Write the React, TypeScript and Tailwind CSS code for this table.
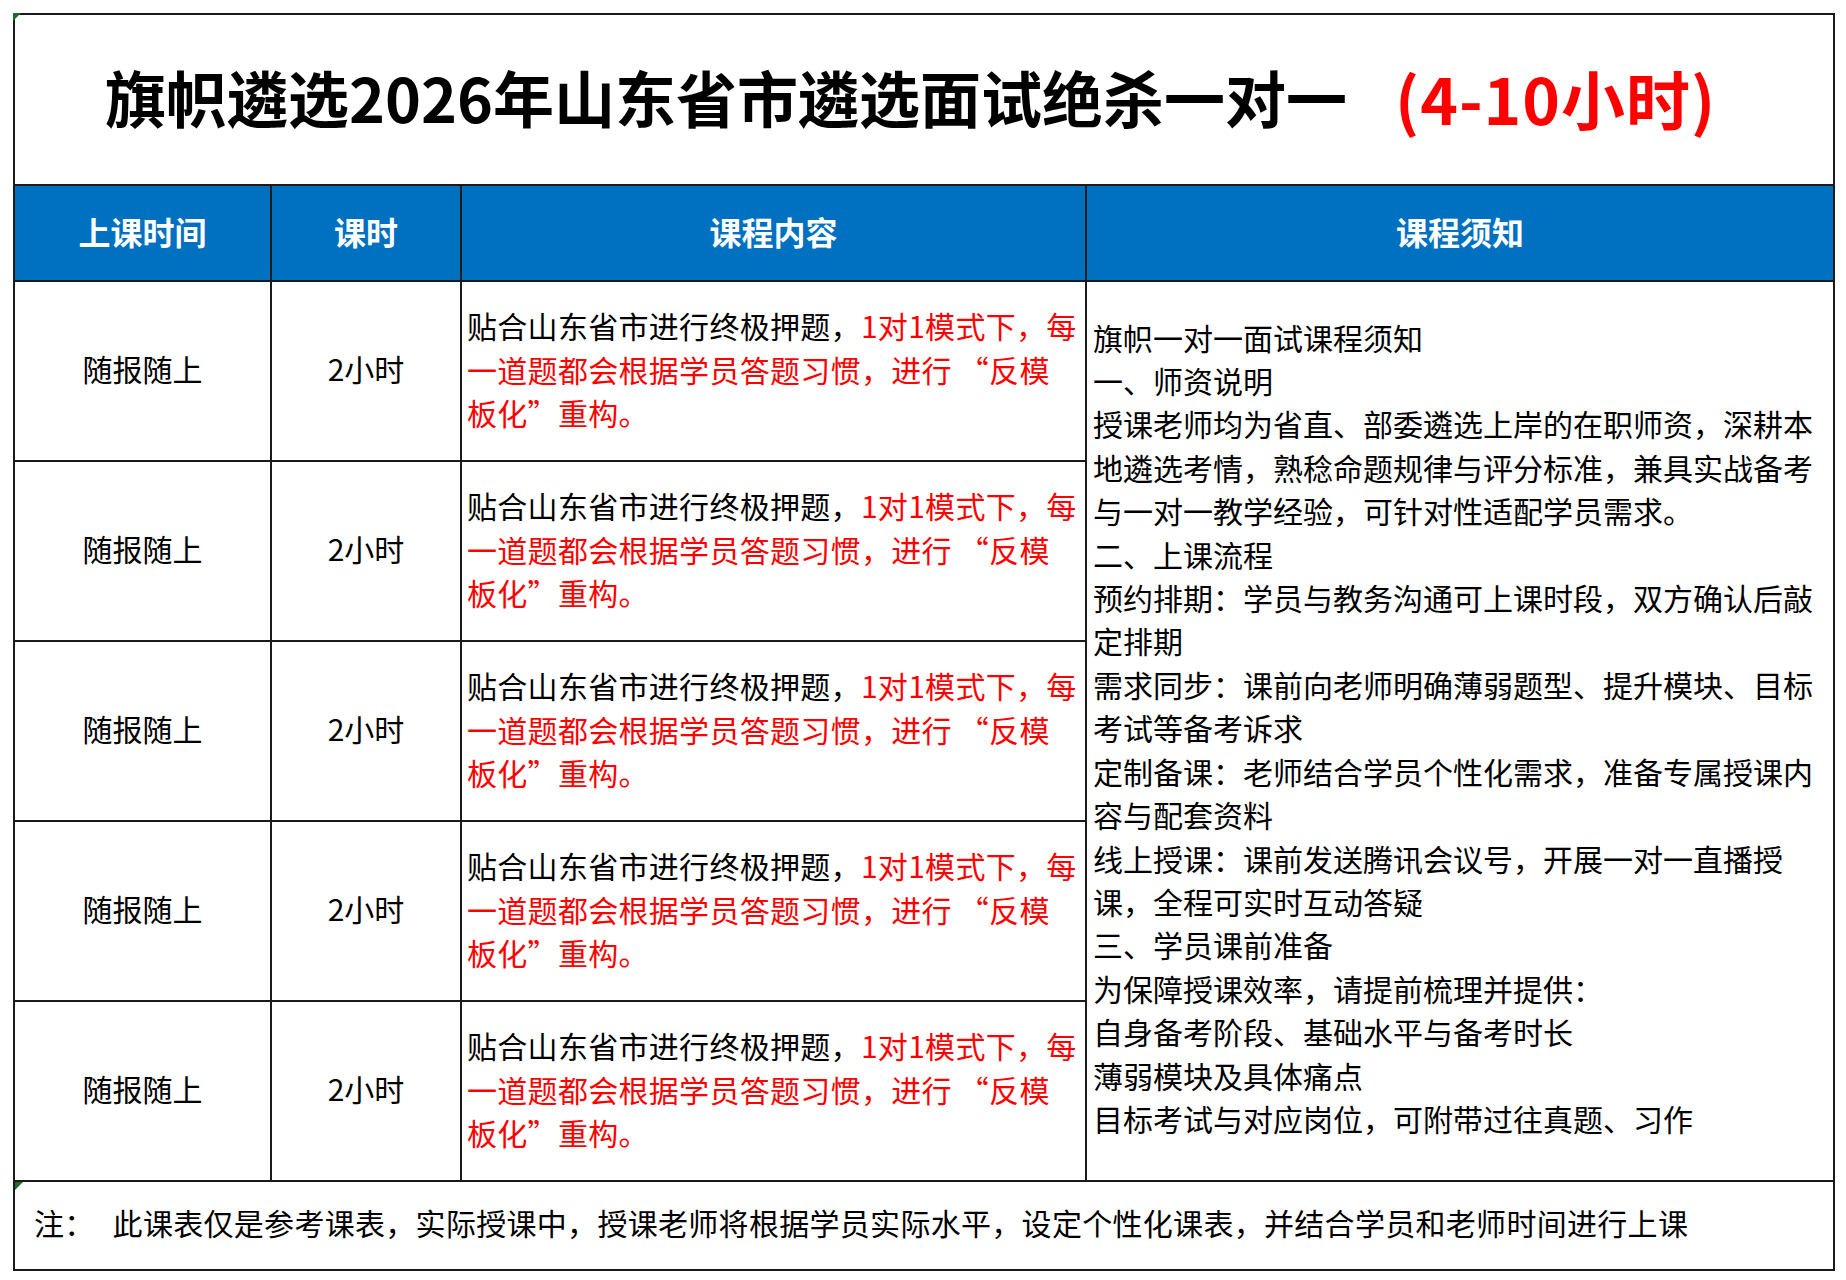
const lessons = Array.from({ length: 5 }, () => ({
  time: "随报随上",
  hours: "2小时",
}));

const notice = [
  "旗帜一对一面试课程须知",
  "一、师资说明",
  "授课老师均为省直、部委遴选上岸的在职师资，深耕本地遴选考情，熟稔命题规律与评分标准，兼具实战备考与一对一教学经验，可针对性适配学员需求。",
  "二、上课流程",
  "预约排期：学员与教务沟通可上课时段，双方确认后敲定排期",
  "需求同步：课前向老师明确薄弱题型、提升模块、目标考试等备考诉求",
  "定制备课：老师结合学员个性化需求，准备专属授课内容与配套资料",
  "线上授课：课前发送腾讯会议号，开展一对一直播授课，全程可实时互动答疑",
  "三、学员课前准备",
  "为保障授课效率，请提前梳理并提供：",
  "自身备考阶段、基础水平与备考时长",
  "薄弱模块及具体痛点",
  "目标考试与对应岗位，可附带过往真题、习作",
];

function Marker() {
  return (
    <span className="absolute left-0 top-0 h-0 w-0 border-t-[8px] border-r-[8px] border-t-[#1f6b2a] border-r-transparent" />
  );
}

function Content() {
  return (
    <div className="text-[30px] leading-[43.5px] whitespace-nowrap tracking-[0.3px]">
      <div>
        贴合山东省市进行终极押题，<span className="text-[#f00]">1对1模式下，每</span>
      </div>
      <div className="text-[#f00]">一道题都会根据学员答题习惯，进行 “反模</div>
      <div className="text-[#f00]">板化”重构。</div>
    </div>
  );
}

export default function App() {
  return (
    <div
      className="min-h-screen bg-white p-[13px] text-black"
      style={{ fontFamily: '"Noto Sans CJK SC", "Noto Sans", sans-serif' }}
    >
      <div className="relative w-[1820px]">
        <Marker />
        <table className="w-full table-fixed border-collapse border-2 border-[#1a1a1a]">
          <colgroup>
            <col className="w-[257px]" />
            <col className="w-[190px]" />
            <col className="w-[625px]" />
            <col className="w-[748px]" />
          </colgroup>
          <tbody>
            {/* title */}
            <tr className="h-[171px]">
              <td colSpan={4} className="border-2 border-[#1a1a1a] p-0">
                <div className="flex items-center pl-[90px] pb-[6px] text-[61px] font-bold">
                  <span>旗帜遴选2026年山东省市遴选面试绝杀一对一</span>
                  <span className="ml-[48px] text-[64px] tracking-[1px] text-[#f00]">(4-10小时)</span>
                </div>
              </td>
            </tr>

            {/* header */}
            <tr className="h-[96px] bg-[#0070c0] text-[32px] font-bold text-white">
              <th className="border-2 border-[#1a1a1a] pb-[5px] font-bold">上课时间</th>
              <th className="border-2 border-[#1a1a1a] pb-[5px] font-bold">课时</th>
              <th className="border-2 border-[#1a1a1a] pb-[5px] font-bold">课程内容</th>
              <th className="border-2 border-[#1a1a1a] pb-[5px] font-bold">课程须知</th>
            </tr>

            {lessons.map((row, i) => (
              <tr key={i} className="h-[180px] text-[30px]">
                <td className="border-2 border-[#1a1a1a] pb-[5px] text-center">{row.time}</td>
                <td className="border-2 border-[#1a1a1a] pb-[5px] text-center">{row.hours}</td>
                <td className="border-2 border-[#1a1a1a] pb-[3px] pl-[5px] align-middle">
                  <Content />
                </td>
                {i === 0 && (
                  <td rowSpan={5} className="border-2 border-[#1a1a1a] pb-[6px] pl-[6px] pr-[4px] align-middle">
                    <div className="text-[30px] leading-[43.4px]">
                      {notice.map((line, j) => (
                        <p key={j}>{line}</p>
                      ))}
                    </div>
                  </td>
                )}
              </tr>
            ))}

            {/* footer note */}
            <tr className="h-[89px]">
              <td colSpan={4} className="relative border-2 border-[#1a1a1a] pb-[6px] pl-[19px] text-[30px] tracking-[0.3px]">
                <Marker />
                <span>注：</span>
                <span className="ml-[18px]">
                  此课表仅是参考课表，实际授课中，授课老师将根据学员实际水平，设定个性化课表，并结合学员和老师时间进行上课
                </span>
              </td>
            </tr>
          </tbody>
        </table>
      </div>
    </div>
  );
}
